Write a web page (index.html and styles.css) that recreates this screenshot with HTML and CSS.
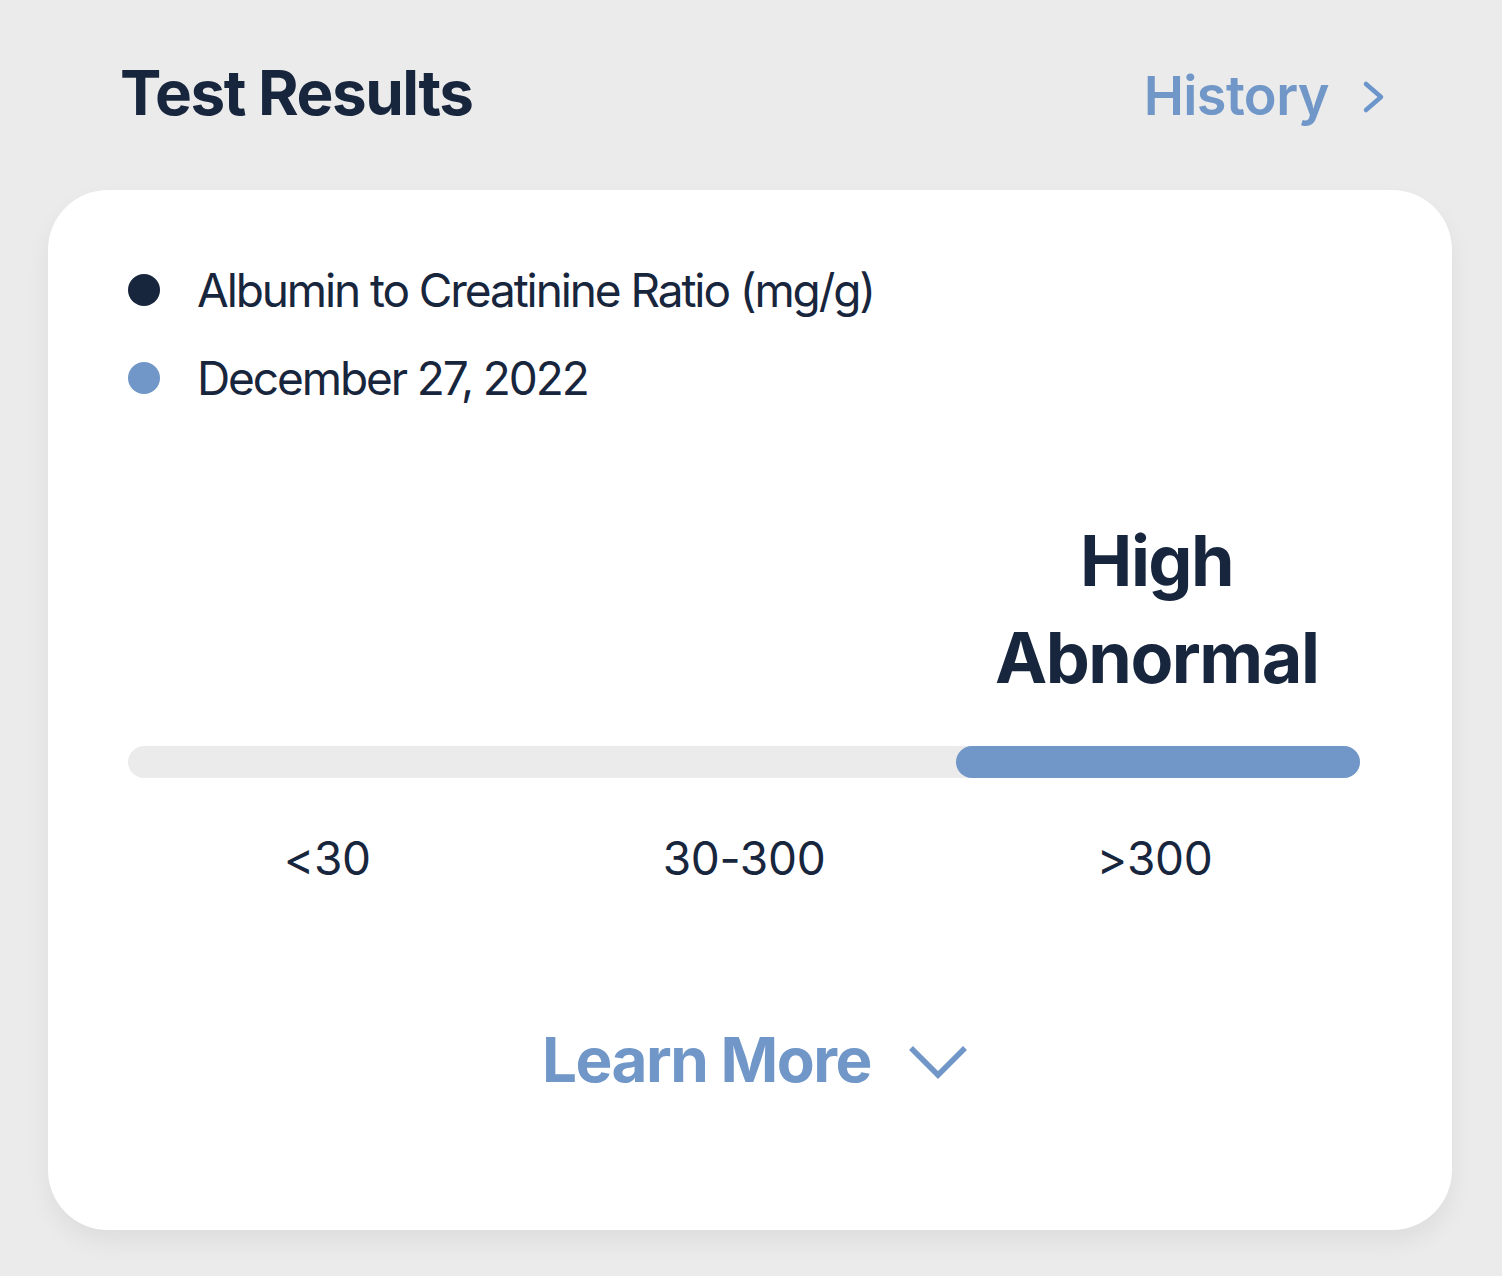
FILE: index.html
```html
<!DOCTYPE html>
<html>
<head>
<meta charset="utf-8">
<link rel="stylesheet" href="styles.css">
</head>
<body>
<div class="page">
  <div class="header">
    <h1 class="title">Test Results</h1>
    <a class="history">History
      <svg class="chev-right" width="24" height="34" viewBox="0 0 24 34"><path d="M4 4 L19 17 L4 30" fill="none" stroke="#6b95cb" stroke-width="4.5" stroke-linecap="round" stroke-linejoin="round"/></svg>
    </a>
  </div>
  <div class="card">
    <div class="legend">
      <div class="legend-row"><span class="dot dot-dark"></span><span>Albumin to Creatinine Ratio (mg/g)</span></div>
      <div class="legend-row"><span class="dot dot-blue"></span><span>December 27, 2022</span></div>
    </div>
    <div class="scale">
      <div class="status-row">
        <div class="cell"></div>
        <div class="cell"></div>
        <div class="cell status">High<br>Abnormal</div>
      </div>
      <div class="bar"><div class="bar-fill"></div></div>
      <div class="labels">
        <div class="cell lbl-1">&lt;30</div>
        <div class="cell">30-300</div>
        <div class="cell">&gt;300</div>
      </div>
    </div>
    <div class="learn">
      <span>Learn More</span>
      <svg class="chev-down" width="60" height="36" viewBox="0 0 60 36"><path d="M3 4 L30 31 L57 4" fill="none" stroke="#7097c8" stroke-width="5.5"/></svg>
    </div>
  </div>
</div>
</body>
</html>
```
FILE: styles.css
```css
html, body {
  margin: 0;
  padding: 0;
  background: #ebebeb;
  font-family: Inter, "Noto Sans", sans-serif;
  color: #18263d;
}
.page {
  width: 1502px;
  height: 1276px;
  box-sizing: border-box;
  padding: 0 50px 0 48px;
}
.header {
  height: 190px;
  display: flex;
  align-items: flex-start;
  justify-content: space-between;
  padding: 0 66px 0 72px;
}
.title {
  margin: 57px 0 0;
  font-size: 62px;
  font-weight: 700;
  letter-spacing: -1.5px;
  line-height: 72px;
}
.history {
  margin-top: 64px;
  display: flex;
  align-items: center;
  gap: 33px;
  font-size: 54px;
  font-weight: 600;
  color: #7097c8;
  line-height: 64px;
  letter-spacing: -0.6px;
}
.chev-right { margin-top: 2px; }
.card {
  background: #fff;
  border-radius: 60px;
  height: 1040px;
  box-sizing: border-box;
  padding: 56px 92px 0 80px;
  box-shadow: 0 12px 24px rgba(0,0,0,0.06);
}
.legend {
  display: flex;
  flex-direction: column;
}
.legend-row {
  display: flex;
  align-items: center;
  height: 88px;
  gap: 37px;
  font-size: 46px;
  letter-spacing: -2.1px;
}
.dot {
  width: 32px;
  height: 32px;
  border-radius: 50%;
  flex: none;
}
.dot-dark { background: #18263d; }
.dot-blue { background: #7097c8; }
.scale {
  margin-top: 90px;
}
.status-row, .labels {
  display: grid;
  grid-template-columns: 1fr 1fr 1fr;
}
.cell { text-align: center; }
.status {
  font-size: 70px;
  font-weight: 700;
  line-height: 97px;
  letter-spacing: -1.5px;
  transform: translateX(2px);
}
.bar {
  margin-top: 40px;
  height: 32px;
  border-radius: 16px;
  background: #ebebeb;
  display: flex;
  justify-content: flex-end;
}
.bar-fill {
  width: 404px;
  height: 32px;
  border-radius: 16px;
  background: #7097c8;
}
.labels {
  margin-top: 52px;
  font-size: 46px;
  line-height: 56px;
  letter-spacing: -0.3px;
}
.lbl-1 { transform: translateX(-6px); }
.learn {
  margin-top: 136px;
  display: flex;
  justify-content: center;
  align-items: center;
  gap: 37px;
  font-size: 62px;
  font-weight: 700;
  color: #7097c8;
  letter-spacing: -1.5px;
  padding-left: 22px;
}
.chev-down { margin-top: 4px; }
```
